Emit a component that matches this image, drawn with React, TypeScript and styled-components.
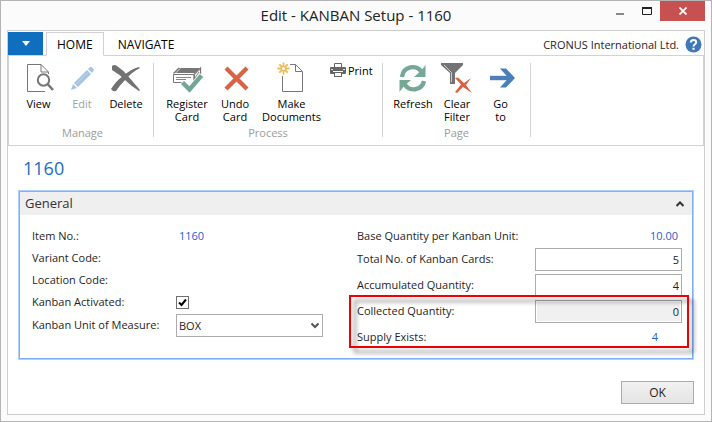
import React, { useState } from "react";
import styled, { createGlobalStyle } from "styled-components";

const GlobalStyle = createGlobalStyle`
  *, *::before, *::after { box-sizing: border-box; }
  body { margin: 0; }
  body, button, input, select {
    font-family: "Open Sans", "Noto Sans", sans-serif;
    font-size: 11px;
    line-height: 13px;
    color: #1e1e1e;
  }
`;

const Window = styled.div`
  display: flex;
  flex-direction: column;
  min-height: 100vh;
  padding: 0 6px 6px;
  border: 1px solid #b4b4b4;
  background: #fbfbfb;
`;

const TitleBar = styled.header`
  display: grid;
  grid-template-columns: 1fr auto 1fr;
  align-items: start;
  height: 29px;
`;

const Title = styled.h1`
  grid-column: 2;
  margin: 0;
  font-size: 15px;
  font-weight: 400;
  line-height: 29px;
  color: #222;
`;

const WindowButtons = styled.div`
  display: flex;
  justify-self: end;
`;

const WindowButton = styled.button<{ $close?: boolean }>`
  display: grid;
  place-items: center;
  width: ${(p) => (p.$close ? 45 : 27)}px;
  height: 20px;
  padding: 0;
  border: 0;
  background: ${(p) => (p.$close ? "#c75050" : "transparent")};
`;

const Frame = styled.div`
  display: flex;
  flex: 1;
  flex-direction: column;
  border: 1px solid #cdcdcd;
  background: #fff;
`;

const TabRow = styled.nav`
  display: flex;
  align-items: flex-end;
  height: 25px;
  padding-right: 2px;
  border-bottom: 1px solid #d2d2d2;
`;

const FileMenu = styled.button`
  display: grid;
  place-items: center;
  width: 35px;
  height: 23px;
  padding: 0;
  border: 0;
  background: #106ebe;
`;

const Tab = styled.button<{ $active?: boolean }>`
  height: 24px;
  margin-left: 3px;
  margin-bottom: -1px;
  padding: 0 10px;
  border: 1px solid ${(p) => (p.$active ? "#d2d2d2" : "transparent")};
  border-bottom-color: ${(p) => (p.$active ? "#fff" : "transparent")};
  background: ${(p) => (p.$active ? "#fff" : "transparent")};
  font-size: 12px;
  color: #000;
`;

const Company = styled.div`
  display: flex;
  align-items: center;
  gap: 6px;
  height: 24px;
  margin-left: auto;
  padding-top: 2px;
`;

const HelpButton = styled.button`
  display: block;
  width: 17px;
  height: 17px;
  padding: 0;
  border: 0;
  background: none;
  svg { display: block; }
`;

const Ribbon = styled.div`
  display: flex;
  height: 90px;
  padding: 7px 0 8px;
  border: solid #d2d2d2;
  border-width: 0 1px 1px;
`;

const Group = styled.section<{ $end?: number }>`
  display: flex;
  flex-direction: column;
  justify-content: space-between;
  padding: 0 ${(p) => p.$end ?? 8}px 0 8px;
  border-right: 1px solid #d2d2d2;
`;

const GroupItems = styled.div`
  display: flex;
  align-items: flex-start;
  height: 64px;
`;

const GroupName = styled.div`
  height: 11px;
  text-align: center;
  line-height: 13px;
  color: #9b9b9b;
`;

const Action = styled.button<{ $width: number }>`
  display: flex;
  flex-direction: column;
  align-items: center;
  gap: 4px;
  width: ${(p) => p.$width}px;
  padding: 0;
  border: 0;
  background: none;
  color: #000;
  white-space: pre-line;
  &:disabled { color: #a0a0a0; }
  svg { display: block; }
`;

const SmallAction = styled.button`
  display: flex;
  align-items: center;
  gap: 2px;
  width: 49px;
  height: 14px;
  padding: 0 0 0 5px;
  border: 0;
  background: none;
  color: #000;
  svg { flex: none; }
`;

const Page = styled.main`
  display: flex;
  flex: 1;
  flex-direction: column;
  padding: 10px;
`;

const RecordName = styled.h2`
  margin: 0 0 10px;
  padding-left: 5px;
  font-size: 18px;
  font-weight: 400;
  line-height: 24px;
  color: #1a6cc4;
`;

const FastTab = styled.section`
  border: 1px solid #aed0ff;
  box-shadow: inset 0 0 0 1px #7eb0fa;
  padding: 1px;
`;

const FastTabHeader = styled.button`
  display: flex;
  align-items: center;
  justify-content: space-between;
  width: 100%;
  height: 23px;
  padding: 0 8px 0 5px;
  border: 0;
  background: #efefef;
  font-size: 13px;
  color: #333;
`;

const Fields = styled.div`
  display: grid;
  grid-template-columns: 1fr 1fr;
  padding: 10px 10px 10px 12px;
`;

const Row = styled.div<{ $height: number; $split?: boolean }>`
  display: flex;
  align-items: flex-start;
  justify-content: ${(p) => (p.$split ? "space-between" : "flex-start")};
  height: ${(p) => p.$height}px;
`;

const Label = styled.label<{ $width?: number }>`
  width: ${(p) => (p.$width ? `${p.$width}px` : "auto")};
  line-height: 22px;
  white-space: nowrap;
`;

const Value = styled.output<{ $end?: number }>`
  padding-left: 3px;
  padding-right: ${(p) => p.$end ?? 0}px;
  line-height: 22px;
  color: #1a62d0;
`;

const TextBox = styled.input`
  width: 147px;
  height: 23px;
  padding: 0 2px;
  border: 1px solid #ababb0;
  background: #fff;
  text-align: right;
  &:read-only {
    background: #f0f0f0;
    box-shadow: inset 0 0 0 1px #fff;
  }
`;

const CheckBox = styled.input`
  appearance: none;
  width: 13px;
  height: 13px;
  margin: 5px 0 0;
  border: 1px solid #707070;
  background: #fff;
  &:checked {
    background: url("data:image/svg+xml,%3Csvg xmlns='http://www.w3.org/2000/svg' viewBox='0 0 11 11'%3E%3Cpath d='M2 5.5L4.5 8L9 2.5' fill='none' stroke='black' stroke-width='2'/%3E%3C/svg%3E");
  }
`;

const SelectBox = styled.div`
  display: grid;
  align-items: center;
  width: 147px;
  > * { grid-area: 1 / 1; }
  svg {
    justify-self: end;
    margin-right: 4px;
    pointer-events: none;
  }
`;

const Select = styled.select`
  appearance: none;
  width: 100%;
  height: 23px;
  padding: 0 2px;
  border: 1px solid #ababb0;
  border-radius: 0;
  background: #fff;
`;

const Highlight = styled.div`
  position: relative;
  &::after {
    content: "";
    position: absolute;
    inset: -5px -7px 0 -8px;
    border: 2px solid #f00000;
    filter: drop-shadow(5px 5px 2px rgba(0, 0, 0, 0.45));
    pointer-events: none;
  }
`;

const Footer = styled.footer`
  display: flex;
  justify-content: flex-end;
  margin-top: auto;
  padding-top: 20px;
`;

const OkButton = styled.button`
  width: 73px;
  height: 23px;
  padding: 0;
  border: 1px solid #acacac;
  background: linear-gradient(#f1f1f1, #e4e4e4);
  font-size: 12px;
`;

const ViewIcon = () => (
  <svg width="30" height="30" viewBox="0 0 30 30" fill="none" stroke="#767676">
    <path d="M21 28.5H3.5V1.5H17L24.5 9V11M17 1.5V9H24" />
    <circle cx="19.5" cy="17" r="5.7" stroke="#777" strokeWidth="2" />
    <path d="M24 21.5L29 27" strokeWidth="2.6" />
  </svg>
);

const EditIcon = () => (
  <svg width="30" height="30" viewBox="0 0 30 30" fill="#a6c3e3">
    <path d="M7 20L20 7L24 11L11 24Z" />
    <path d="M21 6L23 4Q24 3.400 25 4.500L26.500 6Q27.200 7 26.500 8L25 10Z" />
    <path d="M6 21L10 25L4 27Z" />
    <path d="M9 21.500L21 9.500" stroke="#c3d7ec" />
  </svg>
);

const DeleteIcon = () => (
  <svg width="30" height="30" viewBox="0 0 30 30" fill="#727272">
    <path d="M1 3Q3 1 6 3Q12 7 17 13Q22 19 29 27L28 28Q20 23 14 17Q8 11 1 7Z" />
    <path d="M29 5Q21 9 15 16Q9 22 5 28Q2 29 0 26Q5 18 12 13Q20 6 28 4Z" />
  </svg>
);

const RegisterIcon = () => (
  <svg width="32" height="30" viewBox="0 0 32 30" fill="none" stroke="#777">
    <path d="M8 5H29L24 10H3Z" fill="#777" stroke="none" />
    <path d="M4.500 10L9 5.500" stroke="#fff" />
    <path d="M2.500 10.500L8 5M23 20V11.500L29.500 5V12" strokeWidth="1.300" />
    <path d="M13 19.500H2.500V11.500H23.500V18" />
    <path d="M5 14.500H20M5 16.500H15" strokeWidth=".9" />
    <path d="M24 15L28 9M25 18L29 12" />
    <path d="M11 19L18.500 26.500L31 12" stroke="#fff" strokeWidth="6" />
    <path d="M11.500 19.500L18.500 26.500L30.500 12.500" stroke="#72a796" strokeWidth="4.400" />
  </svg>
);

const UndoIcon = () => (
  <svg width="30" height="30" viewBox="0 0 30 30" stroke="#d96445" strokeWidth="4.400">
    <path d="M6 5L27 26M27 5L6 26" />
  </svg>
);

const MakeIcon = () => (
  <svg width="30" height="30" viewBox="0 0 30 30" fill="none" overflow="visible">
    <path d="M5.500 13V28.500H25.500V8.500L18.500 1.500H13M18.500 1.500V8.500H25" stroke="#777" />
    <path
      d="M6.500 -.5V3.500M6.500 7.500V11.500M.5 5.500H4.500M8.500 5.500H12.500M2.300 1.300L5 4M8 7L10.700 9.700M10.700 1.300L8 4M5 7L2.300 9.700"
      stroke="#eabb59"
      strokeWidth="1.800"
    />
    <circle cx="6.500" cy="5.500" r="2.200" fill="#fff" stroke="#eabb59" strokeWidth="1.300" />
  </svg>
);

const PrintIcon = () => (
  <svg width="16" height="16" viewBox="0 0 16 16">
    <path d="M4.500 5V1.500H11.500V5" fill="#fff" stroke="#666" />
    <rect y="5" width="16" height="7" rx="1" fill="#666" />
    <path d="M1 7.500H3M13 7.500H15" stroke="#ddd" />
    <path d="M3 9.500H13" stroke="#fff" />
    <rect x="4.500" y="10.500" width="7" height="4" fill="#fff" stroke="#666" />
  </svg>
);

const RefreshIcon = () => (
  <svg width="30" height="30" viewBox="0 0 30 30">
    <g fill="none" stroke="#75a996" strokeWidth="4.400">
      <path d="M4 14C5 3 19 1 23.500 9" />
      <path d="M26 18C24 28 11 29 6.500 21" />
    </g>
    <path d="M27.500 2V14H16L20.500 10L24.500 6Z" fill="#75a996" />
    <path d="M1.500 29V17H13L8.500 21L4.500 25Z" fill="#75a996" />
  </svg>
);

const FilterIcon = () => (
  <svg width="34" height="30" viewBox="0 0 34 30">
    <path d="M1 0H23V2L15 10V21H10V10L1 2Z" fill="#737373" />
    <path d="M4 2L11.500 9.500V19" stroke="#ccc" fill="none" />
    <path d="M15 15L18 14.500L24 20L31 15L26 22L32 30L23 24L17 30L15 29L21 21.500Z" fill="#d96445" />
  </svg>
);

const GoIcon = () => (
  <svg width="30" height="30" viewBox="0 0 30 30" fill="none" stroke="#4a80ba">
    <path d="M4 15H27" strokeWidth="4.400" />
    <path d="M14 5.500H20L29 15L20 24.500H14L22.500 15Z" fill="#4a80ba" stroke="none" />
  </svg>
);

export default function App() {
  const [activated, setActivated] = useState(true);
  return (
    <Window>
      <GlobalStyle />
      <TitleBar>
        <Title>Edit - KANBAN Setup - 1160</Title>
        <WindowButtons>
          <WindowButton aria-label="Minimize">
            <svg width="10" height="10"><path d="M1 8H9" stroke="#888" strokeWidth="2" /></svg>
          </WindowButton>
          <WindowButton aria-label="Maximize">
            <svg width="10" height="8"><path d="M.5 1V7.500H9.500V1" fill="none" stroke="#222" /><path d="M0 1H10" stroke="#222" strokeWidth="2" /></svg>
          </WindowButton>
          <WindowButton $close aria-label="Close">
            <svg width="8" height="8"><path d="M.5 .5L7.500 7.500M7.500 .5L.5 7.500" stroke="#fff" strokeWidth="1.800" /></svg>
          </WindowButton>
        </WindowButtons>
      </TitleBar>
      <Frame>
        <TabRow>
          <FileMenu aria-label="Application menu">
            <svg width="8" height="5"><path d="M0 0H8L4 5Z" fill="#fff" /></svg>
          </FileMenu>
          <Tab $active>HOME</Tab>
          <Tab>NAVIGATE</Tab>
          <Company>
            CRONUS International Ltd.
            <HelpButton aria-label="Help">
              <svg width="17" height="17" viewBox="0 0 17 17" fill="none" stroke="#fff">
                <circle cx="8.500" cy="8.500" r="8" fill="#3f78b5" stroke="none" />
                <path d="M5.800 6.500C5.800 3 11.200 3.200 11.200 6.300C11.200 8.300 8.500 8.200 8.500 10.500" strokeWidth="2" />
                <path d="M8.500 11.800V13.800" strokeWidth="2.200" />
              </svg>
            </HelpButton>
          </Company>
        </TabRow>
        <Ribbon>
          <Group $end={5}>
            <GroupItems>
              <Action $width={43}><ViewIcon />View</Action>
              <Action $width={44} disabled><EditIcon />Edit</Action>
              <Action $width={44}><DeleteIcon />Delete</Action>
            </GroupItems>
            <GroupName>Manage</GroupName>
          </Group>
          <Group>
            <GroupItems>
              <Action $width={50}><RegisterIcon />{"Register\nCard"}</Action>
              <Action $width={46}><UndoIcon />{"Undo\nCard"}</Action>
              <Action $width={67}><MakeIcon />{"Make\nDocuments"}</Action>
              <SmallAction><PrintIcon />Print</SmallAction>
            </GroupItems>
            <GroupName>Process</GroupName>
          </Group>
          <Group>
            <GroupItems>
              <Action $width={44}><RefreshIcon />Refresh</Action>
              <Action $width={44}><FilterIcon />{"Clear\nFilter"}</Action>
              <Action $width={43}><GoIcon />{"Go\nto"}</Action>
            </GroupItems>
            <GroupName>Page</GroupName>
          </Group>
        </Ribbon>
        <Page>
          <RecordName>1160</RecordName>
          <FastTab>
            <FastTabHeader aria-expanded="true">
              General
              <svg width="8" height="6"><path d="M.5 5L4 1.500L7.500 5" fill="none" stroke="#333" strokeWidth="2" /></svg>
            </FastTabHeader>
            <Fields>
              <div>
                <Row $height={22}>
                  <Label $width={144} htmlFor="item">Item No.:</Label>
                  <Value id="item">1160</Value>
                </Row>
                <Row $height={22}>
                  <Label $width={144} htmlFor="variant">Variant Code:</Label>
                  <Value id="variant" />
                </Row>
                <Row $height={22}>
                  <Label $width={144} htmlFor="location">Location Code:</Label>
                  <Value id="location" />
                </Row>
                <Row $height={23}>
                  <Label $width={144} htmlFor="activated">Kanban Activated:</Label>
                  <CheckBox
                    id="activated"
                    type="checkbox"
                    checked={activated}
                    onChange={(e) => setActivated(e.target.checked)}
                  />
                </Row>
                <Row $height={23}>
                  <Label $width={144} htmlFor="unit">Kanban Unit of Measure:</Label>
                  <SelectBox>
                    <Select id="unit"><option>BOX</option></Select>
                    <svg width="8" height="7"><path d="M.5 1.500L4 5L7.500 1.500" fill="none" stroke="#555" strokeWidth="2" /></svg>
                  </SelectBox>
                </Row>
              </div>
              <div>
                <Row $height={23} $split>
                  <Label htmlFor="base">Base Quantity per Kanban Unit:</Label>
                  <Value id="base" $end={4}>10.00</Value>
                </Row>
                <Row $height={26} $split>
                  <Label htmlFor="total">Total No. of Kanban Cards:</Label>
                  <TextBox id="total" defaultValue="5" />
                </Row>
                <Row $height={26} $split>
                  <Label htmlFor="accumulated">Accumulated Quantity:</Label>
                  <TextBox id="accumulated" defaultValue="4" />
                </Row>
                <Highlight>
                  <Row $height={26} $split>
                    <Label htmlFor="collected">Collected Quantity:</Label>
                    <TextBox id="collected" value="0" readOnly />
                  </Row>
                  <Row $height={22} $split>
                    <Label htmlFor="supply">Supply Exists:</Label>
                    <Value id="supply" $end={24}>4</Value>
                  </Row>
                </Highlight>
              </div>
            </Fields>
          </FastTab>
          <Footer><OkButton>OK</OkButton></Footer>
        </Page>
      </Frame>
    </Window>
  );
}
